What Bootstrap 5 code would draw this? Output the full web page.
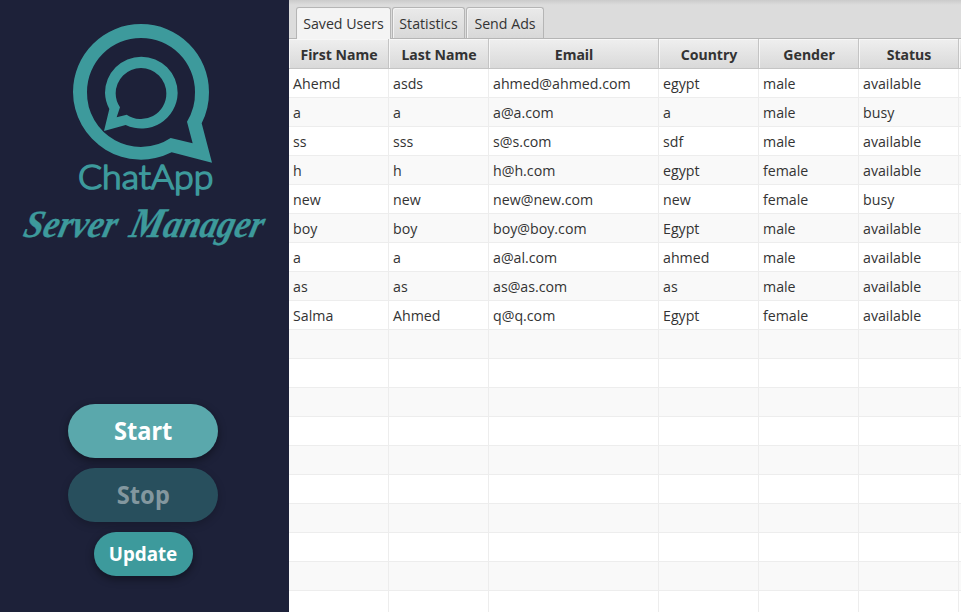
<!DOCTYPE html>
<html lang="en">
<head>
<meta charset="utf-8">
<meta name="viewport" content="width=device-width, initial-scale=1">
<title>ChatApp Server Manager</title>
<link href="https://cdn.jsdelivr.net/npm/bootstrap@5.3.0/dist/css/bootstrap.min.css" rel="stylesheet">
<style>
body{font-family:"Open Sans","Noto Sans",sans-serif;color:#333;font-size:14.2px}
.side{width:289px;background:#1d2139}
.logo{margin:15px 0 0 60px;width:165px;height:190px}
.brand-title{margin:-10px 0 0 10px;width:270px;height:60px;overflow:visible}
.actions{margin-top:149px;padding-right:3px;gap:10px}
.pill{border:0;border-radius:40px;color:#fff;font-weight:700;font-family:"Noto Sans",sans-serif;background:#3d9a9c;padding:0;box-shadow:0 3px 8px rgba(0,0,0,.42);line-height:1}
.pill-lg{width:150px;height:54px;font-size:24.4px}
.pill-lg span{display:inline-block;transform:scaleX(.97)}
.pill-hot{background:#5aa8ac;padding-left:1px}
.pill:disabled{background:#284f5d;color:#83979f;opacity:1;box-shadow:0 3px 8px rgba(0,0,0,.2)}
.pill-sm{width:99px;height:44px;font-size:18.8px}
.tabs{height:39px;background:linear-gradient(#cbcbcb,#dcdcdc 5px);border-bottom:1px solid #b5b5b5;padding:7px 0 0 7px;gap:1px}
.tabs .nav-link{height:31px;padding:0;border:1px solid #b5b5b5;border-bottom:0;border-radius:3px 3px 0 0;color:#333;background:linear-gradient(#eaeaea,#d8d8d8);box-shadow:inset 1px 1px #f3f3f3;text-align:center;line-height:31px;white-space:nowrap}
.tabs .nav-link.active{height:32px;background:#f4f4f4;color:#333}
.t1{width:95px}.t2{width:73px}.t3{width:78px}
.users{table-layout:fixed;width:672px;border-collapse:separate;border-spacing:0;margin:0}
.users th{height:30px;padding:2px 0 0 1px;text-align:center;font-weight:700;font-family:"Noto Sans",sans-serif;font-size:14.1px;background:linear-gradient(#efefef,#d9d9d9);border-right:1px solid #c4c4c4;border-bottom:1px solid #c4c4c4;box-shadow:inset 1px 1px #f7f7f7;line-height:27px}
.users td{height:29px;padding:2px 0 0 4px;line-height:26px;border-right:1px solid #ededed;border-bottom:1px solid #ededed;white-space:nowrap}
.users th:last-child,.users td:last-child{border-right:0;padding-left:0}
.users tbody tr:nth-child(even) td{background:#f9f9f9}
</style>
<script src="https://cdn.jsdelivr.net/npm/bootstrap@5.3.0/dist/js/bootstrap.bundle.min.js"></script>
</head>
<body class="bg-white">
<div class="d-flex vh-100 overflow-hidden">
  <aside class="side flex-shrink-0 d-flex flex-column">
    <svg class="logo flex-shrink-0 d-block" viewBox="0 0 495 570" fill="#3d9a9c" role="img" aria-label="ChatApp">
      <path fill-rule="evenodd" d="M425 325A204 204 0 0 0 447 231A204 204 0 0 0 39 231A204 204 0 0 0 335 412L456 443ZM381 320L398 385L332 369A162 162 0 0 1 81 231A162 162 0 0 1 405 231A162 162 0 0 1 381 320Z"/>
      <path fill-rule="evenodd" d="M148 282A109 109 0 0 1 135 234A109 109 0 0 1 353 234A109 109 0 0 1 197 330L132 348ZM180 277L170 307L200 299A76 76 0 0 0 319 235A76 76 0 0 0 167 235A76 76 0 0 0 180 277Z"/>
      <text x="54" y="522" font-family="Lato" font-weight="300" font-size="100" stroke="#3d9a9c" stroke-width="5" stroke-linejoin="round" textLength="406" lengthAdjust="spacingAndGlyphs">ChatApp</text>
    </svg>
    <svg class="brand-title flex-shrink-0 d-block" viewBox="0 0 810 180" fill="#3d9a9c">
      <g transform="translate(0 125) skewX(-14)" font-family="Liberation Serif" font-style="italic" font-weight="700" font-size="116" stroke="#3d9a9c" stroke-width="1" stroke-linejoin="round">
        <text x="36" y="0" textLength="278" lengthAdjust="spacingAndGlyphs">Server</text>
        <text x="354" y="0" textLength="400" lengthAdjust="spacingAndGlyphs"><tspan font-size="126">M</tspan>anager</text>
      </g>
    </svg>
    <div class="actions d-flex flex-column align-items-center">
      <button class="btn pill pill-lg pill-hot" type="button"><span>Start</span></button>
      <button class="btn pill pill-lg" type="button" disabled><span>Stop</span></button>
      <button class="btn pill pill-sm" type="button">Update</button>
    </div>
  </aside>
  <main class="flex-grow-1 overflow-hidden">
    <nav class="nav tabs flex-nowrap">
      <a class="nav-link active t1" href="#">Saved Users</a>
      <a class="nav-link t2" href="#">Statistics</a>
      <a class="nav-link t3" href="#">Send Ads</a>
    </nav>
    <table class="users">
      <colgroup><col style="width:100px"><col style="width:100px"><col style="width:170px"><col style="width:100px"><col style="width:100px"><col style="width:100px"><col style="width:2px"></colgroup>
      <thead><tr><th>First Name</th><th>Last Name</th><th>Email</th><th>Country</th><th>Gender</th><th>Status</th><th></th></tr></thead>
      <tbody>
        <tr><td>Ahemd</td><td>asds</td><td>ahmed@ahmed.com</td><td>egypt</td><td>male</td><td>available</td><td></td></tr>
        <tr><td>a</td><td>a</td><td>a@a.com</td><td>a</td><td>male</td><td>busy</td><td></td></tr>
        <tr><td>ss</td><td>sss</td><td>s@s.com</td><td>sdf</td><td>male</td><td>available</td><td></td></tr>
        <tr><td>h</td><td>h</td><td>h@h.com</td><td>egypt</td><td>female</td><td>available</td><td></td></tr>
        <tr><td>new</td><td>new</td><td>new@new.com</td><td>new</td><td>female</td><td>busy</td><td></td></tr>
        <tr><td>boy</td><td>boy</td><td>boy@boy.com</td><td>Egypt</td><td>male</td><td>available</td><td></td></tr>
        <tr><td>a</td><td>a</td><td>a@al.com</td><td>ahmed</td><td>male</td><td>available</td><td></td></tr>
        <tr><td>as</td><td>as</td><td>as@as.com</td><td>as</td><td>male</td><td>available</td><td></td></tr>
        <tr><td>Salma</td><td>Ahmed</td><td>q@q.com</td><td>Egypt</td><td>female</td><td>available</td><td></td></tr>
        <tr><td></td><td></td><td></td><td></td><td></td><td></td><td></td></tr>
        <tr><td></td><td></td><td></td><td></td><td></td><td></td><td></td></tr>
        <tr><td></td><td></td><td></td><td></td><td></td><td></td><td></td></tr>
        <tr><td></td><td></td><td></td><td></td><td></td><td></td><td></td></tr>
        <tr><td></td><td></td><td></td><td></td><td></td><td></td><td></td></tr>
        <tr><td></td><td></td><td></td><td></td><td></td><td></td><td></td></tr>
        <tr><td></td><td></td><td></td><td></td><td></td><td></td><td></td></tr>
        <tr><td></td><td></td><td></td><td></td><td></td><td></td><td></td></tr>
        <tr><td></td><td></td><td></td><td></td><td></td><td></td><td></td></tr>
        <tr><td></td><td></td><td></td><td></td><td></td><td></td><td></td></tr>
      </tbody>
    </table>
  </main>
</div>
</body>
</html>
